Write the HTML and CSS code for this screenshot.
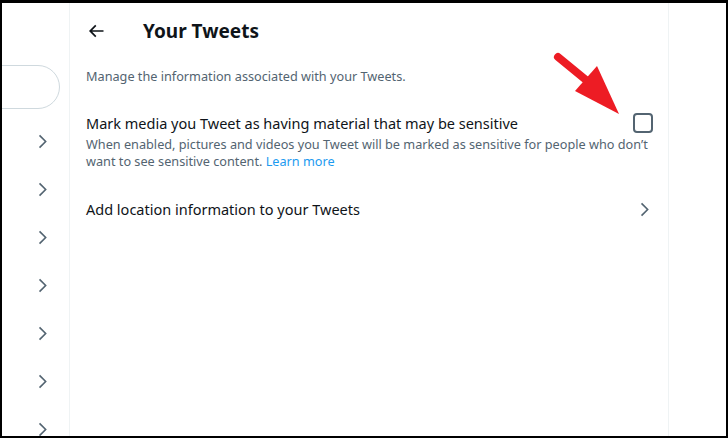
FILE: index.html
```html
<!DOCTYPE html>
<html>
<head>
<meta charset="utf-8">
<link rel="stylesheet" href="styles.css">
</head>
<body>
<div class="frame">
  <aside class="side">
    <div class="search"></div>
    <ul class="navlist">
      <li><svg viewBox="0 0 24 24"><path d="M14.586 12L7.543 4.96l1.414-1.42L17.414 12l-8.457 8.46-1.414-1.42L14.586 12z"/></svg></li>
      <li><svg viewBox="0 0 24 24"><path d="M14.586 12L7.543 4.96l1.414-1.42L17.414 12l-8.457 8.46-1.414-1.42L14.586 12z"/></svg></li>
      <li><svg viewBox="0 0 24 24"><path d="M14.586 12L7.543 4.96l1.414-1.42L17.414 12l-8.457 8.46-1.414-1.42L14.586 12z"/></svg></li>
      <li><svg viewBox="0 0 24 24"><path d="M14.586 12L7.543 4.96l1.414-1.42L17.414 12l-8.457 8.46-1.414-1.42L14.586 12z"/></svg></li>
      <li><svg viewBox="0 0 24 24"><path d="M14.586 12L7.543 4.96l1.414-1.42L17.414 12l-8.457 8.46-1.414-1.42L14.586 12z"/></svg></li>
      <li><svg viewBox="0 0 24 24"><path d="M14.586 12L7.543 4.96l1.414-1.42L17.414 12l-8.457 8.46-1.414-1.42L14.586 12z"/></svg></li>
      <li><svg viewBox="0 0 24 24"><path d="M14.586 12L7.543 4.96l1.414-1.42L17.414 12l-8.457 8.46-1.414-1.42L14.586 12z"/></svg></li>
    </ul>
  </aside>
  <main class="main">
    <header class="head">
      <svg class="back" viewBox="0 0 24 24"><path d="M7.414 13l5.043 5.04-1.414 1.42L3.586 12l7.457-7.46 1.414 1.42L7.414 11H21v2H7.414z"/></svg>
      <h1 class="title">Your Tweets</h1>
    </header>
    <p class="intro">Manage the information associated with your Tweets.</p>
    <div class="setting">
      <div class="setting-row">
        <span class="label">Mark media you Tweet as having material that may be sensitive</span>
        <span class="check"></span>
      </div>
      <p class="desc">When enabled, pictures and videos you Tweet will be marked as sensitive for people who don’t want to see sensitive content. <span class="link">Learn more</span></p>
    </div>
    <div class="setting-row link-row">
      <span class="label">Add location information to your Tweets</span>
      <svg class="chev" viewBox="0 0 24 24"><path d="M14.586 12L7.543 4.96l1.414-1.42L17.414 12l-8.457 8.46-1.414-1.42L14.586 12z"/></svg>
    </div>
    <svg class="arrow" viewBox="0 0 80 70" width="80" height="70">
      <line x1="6" y1="6" x2="45" y2="38" stroke="#ed1c24" stroke-width="8" stroke-linecap="round"/>
      <polygon points="23,40 45,15 67,63" fill="#ed1c24"/>
    </svg>
  </main>
  <div class="right"></div>
</div>
</body>
</html>
```
FILE: styles.css
```css
* { box-sizing: border-box; }
html, body { margin: 0; padding: 0; }
body {
  background: #000;
  font-family: "Noto Sans", "Open Sans", sans-serif;
  color: #0f1419;
}
.frame {
  margin: 3px 2px 0 2px;
  height: 433px;
  background: #fff;
  display: flex;
  overflow: hidden;
}
.side {
  width: 68px;
  flex: none;
  border-right: 1px solid #eff3f4;
  overflow: hidden;
}
.search {
  width: 100px;
  height: 44px;
  margin: 62px 0 0 -42px;
  border: 1px solid #cfd9de;
  border-radius: 22px;
}
.navlist {
  list-style: none;
  margin: 8px 0 0 0;
  padding: 0;
}
.navlist li {
  height: 48px;
  display: flex;
  align-items: center;
  justify-content: flex-end;
  padding-right: 17px;
}
.navlist svg {
  width: 19px;
  height: 19px;
  fill: #536471;
}
.main {
  width: 599px;
  flex: none;
  border-right: 1px solid #eff3f4;
  position: relative;
  padding: 0 16px;
}
.head {
  height: 55px;
  display: flex;
  align-items: center;
}
.back {
  width: 20px;
  height: 20px;
  fill: #0f1419;
}
.title {
  margin: 0 0 0 37px;
  font-size: 19px;
  font-weight: 700;
  line-height: 24px;
}
.intro {
  margin: 10px 0 0 0;
  font-size: 12.7px;
  line-height: 16px;
  color: #536471;
}
.setting { margin-top: 29px; }
.setting-row {
  display: flex;
  align-items: center;
  justify-content: space-between;
}
.label {
  font-size: 14.5px;
  line-height: 20px;
}
.check {
  width: 20px;
  height: 20px;
  border: 2px solid #536471;
  border-radius: 4px;
  margin-right: -1px;
}
.desc {
  margin: 3px 0 0 0;
  font-size: 12.7px;
  line-height: 16.5px;
  color: #536471;
}
.link { color: #1d9bf0; }
.link-row { margin-top: 30px; }
.chev {
  width: 19px;
  height: 19px;
  fill: #536471;
  margin-right: -2px;
}
.arrow {
  position: absolute;
  left: 482px;
  top: 48px;
}
.right { flex: 1; }
```
